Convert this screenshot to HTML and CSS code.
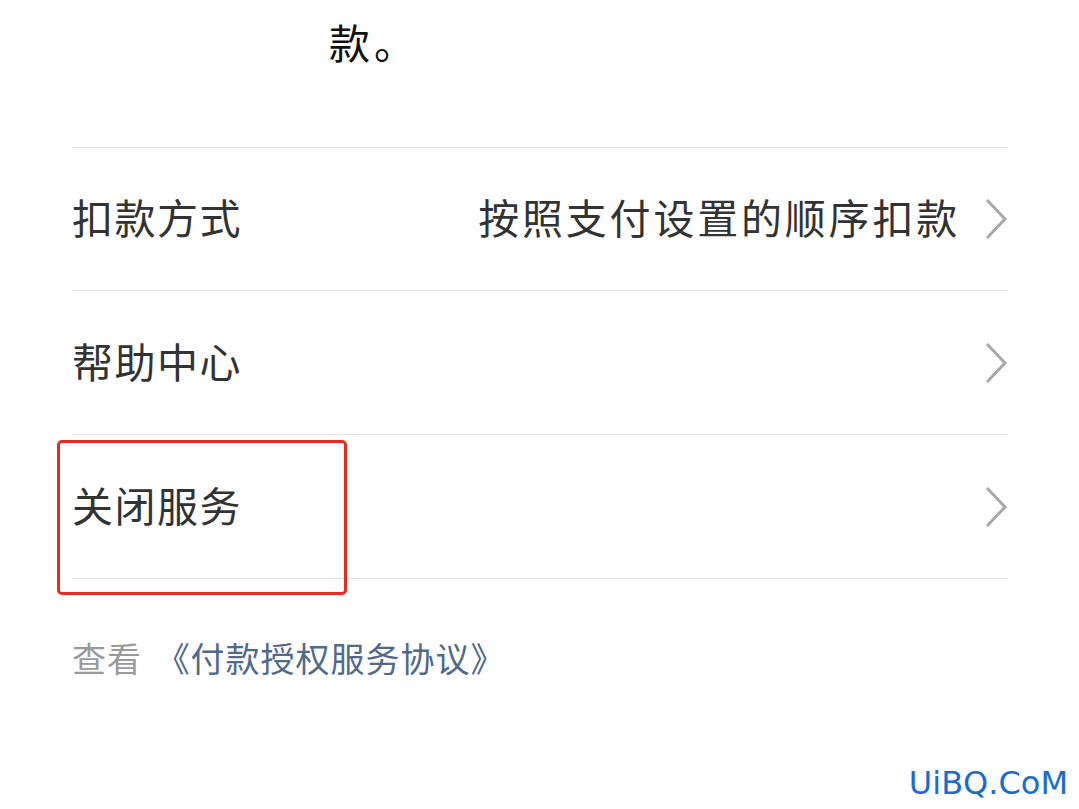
FILE: index.html
```html
<!DOCTYPE html>
<html lang="zh-CN">

<head>
  <meta charset="UTF-8">
  <meta name="viewport" content="width=device-width, initial-scale=1.0">
  <title>自动扣款</title>
  <link rel="stylesheet" href="styles.css">
</head>

<body>
  <div class="page">
    <div class="intro">
      <p>款<span class="dot">。</span></p>
    </div>
    <ul class="menu">
      <li class="first">
        <span class="label">扣款方式</span>
        <span class="value">按照支付设置的顺序扣款</span>
        <svg class="arrow" viewBox="0 0 24 44"><path d="M3 3 L21 22 L3 41" /></svg>
      </li>
      <li>
        <span class="label">帮助中心</span>
        <svg class="arrow" viewBox="0 0 24 44"><path d="M3 3 L21 22 L3 41" /></svg>
      </li>
      <li class="close">
        <span class="label">关闭服务</span>
        <svg class="arrow" viewBox="0 0 24 44"><path d="M3 3 L21 22 L3 41" /></svg>
        <div class="mark"></div>
      </li>
    </ul>
    <div class="agree">
      <span class="see">查看</span>
      <a href="#">《付款授权服务协议》</a>
    </div>
  </div>
  <div class="wm">UiBQ.CoM</div>
</body>

</html>
```

FILE: styles.css
```css
* {
  padding: 0;
  margin: 0;
}

a {
  text-decoration: none;
}

li {
  list-style: none;
}

body {
  width: 1079px;
  height: 809px;
  overflow: hidden;
  background-color: #fff;
  font-family: "Noto Sans CJK SC", "Noto Sans", sans-serif;
  position: relative;
}

.page {
  padding: 0 71px 0 72px;
}

.intro {
  height: 147px;
  border-bottom: 1px solid #e4e4e4;
}

.intro p {
  padding-left: 257px;
  padding-top: 11px;
  line-height: 60px;
  font-size: 41px;
  color: #111;
}

.intro .dot {
  margin-left: 4px;
}

.menu li {
  position: relative;
  display: flex;
  align-items: center;
  height: 143px;
  border-bottom: 1px solid #e4e4e4;
}

.menu .first {
  height: 142px;
}

.menu .label {
  flex: 1;
  font-size: 41px;
  letter-spacing: 1.5px;
  color: #333;
  padding-bottom: 6px;
}

.menu .value {
  font-size: 41px;
  letter-spacing: 2.8px;
  color: #333;
  margin-right: 24px;
  padding-bottom: 6px;
}

.arrow {
  width: 24px;
  height: 44px;
  fill: none;
  stroke: #a8a8a8;
  stroke-width: 3;
}

.mark {
  position: absolute;
  left: -15px;
  top: 5px;
  width: 284px;
  height: 149px;
  border: 3px solid #e62a25;
  border-radius: 5px;
}

.agree {
  padding-top: 55px;
  font-size: 34px;
  line-height: 48px;
}

.agree .see {
  color: #9a9a9a;
  margin-right: 6px;
  letter-spacing: 1px;
}

.agree a {
  color: #4f6a8c;
  letter-spacing: 1px;
}

.wm {
  position: absolute;
  right: 11px;
  bottom: 7px;
  font-family: "DejaVu Sans", sans-serif;
  font-size: 32px;
  color: #1a6dcc;
}
```
